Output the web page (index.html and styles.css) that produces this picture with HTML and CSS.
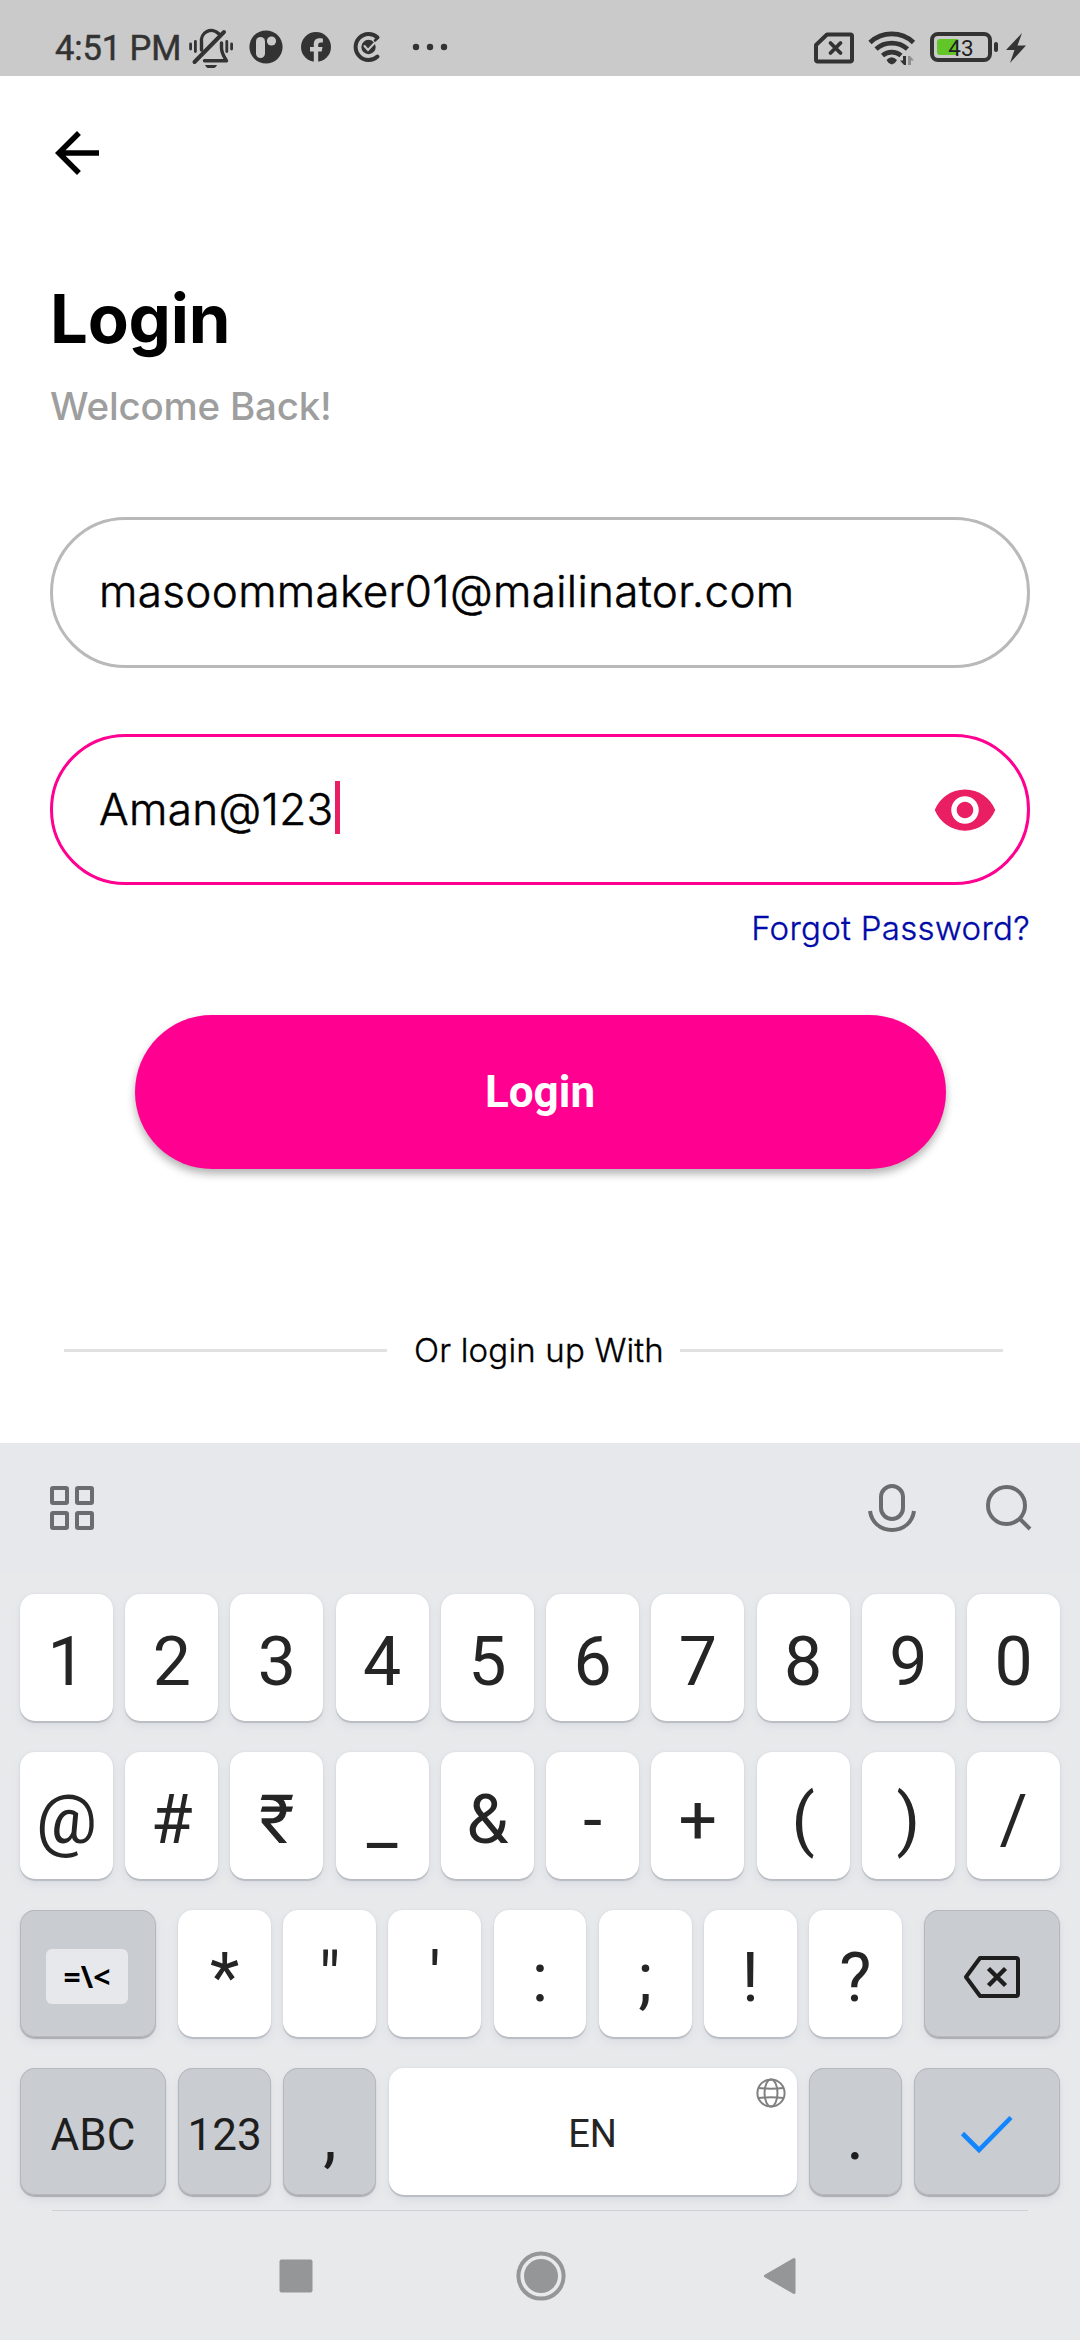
FILE: index.html
```html
<!DOCTYPE html>
<html lang="en">
<head>
<meta charset="utf-8">
<title>Login</title>
<link rel="stylesheet" href="styles.css">
</head>
<body>
<div class="phone">
  <header class="status">
    <span class="time">4:51 PM</span>
    <div class="notices">
      <svg class="bell" width="46" height="40" viewBox="188 28 46 40" fill="none" stroke="#333" stroke-width="3.4" stroke-linecap="round" stroke-linejoin="round">
        <path d="M190.600 44v5M195.400 41.500v10M226.800 41.500v10M231.600 44v5" stroke-width="2.800"/>
        <path d="M224 32l-29.500 30" stroke-width="4"/>
        <path d="M201.500 50v-8a10 10 0 0 1 17-8.500M221.500 43v5c0 5 2 8 5 12.800h-22"/>
        <path d="M205 65h12c-2 5-10 5-12 0z" fill="#333" stroke="none"/>
      </svg>
      <svg class="disc" width="34" height="34" viewBox="0 0 34 34"><circle cx="17" cy="17" r="16.600" fill="#333"/><rect x="7" y="7" width="9" height="21" rx="4.500" fill="#cacaca"/><circle cx="22.500" cy="11" r="4.600" fill="#cacaca"/></svg>
      <svg class="fb" width="30" height="30" viewBox="0 0 30 30"><circle cx="15" cy="15" r="15" fill="#333"/><path d="M12.800 30.200V19.600H9V15h3.800v-2.800c0-4 2.300-6 5.800-6 1.300 0 2.600.2 3.300.3v3.900h-2.200c-1.800 0-2.500 1-2.500 2.300V15h4.300l-.8 4.600h-3.500v10.600z" fill="#cacaca"/></svg>
      <svg class="cee" width="28" height="32" viewBox="0 0 28 32" fill="none" stroke="#333" stroke-linecap="round"><path d="M24.500 6.500a13 13 0 1 0 0 19" stroke-width="4"/><circle cx="15.500" cy="16" r="7.200" fill="#333" stroke="none"/><path d="M11.500 15l3.500 4 6.500-7" stroke="#cacaca" stroke-width="2"/><path d="M22 9.500l2-2" stroke-width="2.500"/></svg>
      <svg class="dots" width="36" height="8" viewBox="0 0 36 8" fill="#333"><circle cx="4" cy="4" r="3.200"/><circle cx="18" cy="4" r="3.200"/><circle cx="32" cy="4" r="3.200"/></svg>
    </div>
    <div class="system">
      <svg class="sim" width="40" height="32" viewBox="0 0 40 32" fill="none" stroke="#333" stroke-width="4" stroke-linejoin="round" stroke-linecap="round"><path d="M13 2.500H36.500a1.500 1.500 0 0 1 1.500 1.500V28a1.500 1.500 0 0 1-1.500 1.500H3.500A1.500 1.500 0 0 1 2 28V13z"/><path d="M16.500 11l10 10M26.500 11l-10 10" stroke-width="3.800"/></svg>
      <svg class="wifi" width="48" height="36" viewBox="868 30 48 36" fill="none" stroke="#333" stroke-width="4.800"><path d="M870 42.500a32 32 0 0 1 43.500 0M876 49a24 24 0 0 1 31.500 0M882.500 55.500a14.500 14.500 0 0 1 18.500 0"/><path d="M886.500 60q5-5.500 10.500 0q-1.500 3.500-5.200 4.500-3.800-1-5.300-4.500z" fill="#333" stroke="none"/><path d="M906 56v9h-2l-4-4.500h3V56z" fill="#333" stroke="none"/><path d="M908 65v-9h2l4 4.500h-3V65z" fill="#8f8f8f" stroke="none"/></svg>
      <div class="battery"><span class="charge"></span><span class="level">43</span></div>
      <span class="tip"></span>
      <svg class="bolt" width="20" height="30" viewBox="0 0 20 30" fill="#333"><path d="M16 0L0 17h8.500L4 30 20 12.500h-8.500z"/></svg>
    </div>
  </header>

  <main class="page">
    <svg class="back" width="66" height="66" viewBox="0 0 24 24"><path d="M20 11H7.830l5.590-5.590L12 4l-8 8 8 8 1.410-1.410L7.830 13H20z"/></svg>
    <h1 class="title">Login</h1>
    <p class="subtitle">Welcome Back!</p>
    <div class="field"><span class="value">masoommaker01@mailinator.com</span></div>
    <div class="field active">
      <span class="value">Aman@123</span><span class="caret"></span>
      <svg class="eye" width="66" height="66" viewBox="0 0 24 24" fill="#e91e63"><path d="M12 4.500C7 4.500 2.730 7.610 1 12c1.730 4.390 6 7.500 11 7.500s9.270-3.110 11-7.500c-1.730-4.390-6-7.500-11-7.500zM12 17c-2.760 0-5-2.240-5-5s2.240-5 5-5 5 2.240 5 5-2.240 5-5 5zm0-8c-1.660 0-3 1.340-3 3s1.340 3 3 3 3-1.340 3-3-1.340-3-3-3z"/></svg>
    </div>
    <a class="forgot">Forgot Password?</a>
    <button class="submit">Login</button>
    <div class="or"><span class="rule"></span><span class="or-text">Or login up With</span><span class="rule"></span></div>
  </main>

  <section class="keyboard">
    <div class="tools">
      <svg width="44" height="44" viewBox="0 0 44 44" fill="none" stroke="#6b6c6e" stroke-width="4"><rect x="2" y="2" width="15" height="15" rx="1"/><rect x="27" y="2" width="15" height="15" rx="1"/><rect x="2" y="27" width="15" height="15" rx="1"/><rect x="27" y="27" width="15" height="15" rx="1"/></svg>
      <svg class="mic" width="48" height="48" viewBox="0 0 48 48" fill="none" stroke="#6b6c6e" stroke-width="4"><rect x="13" y="2" width="22" height="33" rx="11"/><path d="M2 27c1.500 11 10 19 22 19s20.500-8 22-19"/></svg>
      <svg width="46" height="46" viewBox="0 0 46 46" fill="none" stroke="#6b6c6e" stroke-width="4"><circle cx="20.500" cy="20.500" r="18.500"/><path d="M33.500 33.500L44 44"/></svg>
    </div>
    <div class="keys">
      <div class="row"><span class="key">1</span><span class="key">2</span><span class="key">3</span><span class="key">4</span><span class="key">5</span><span class="key">6</span><span class="key">7</span><span class="key">8</span><span class="key">9</span><span class="key">0</span></div>
      <div class="row"><span class="key">@</span><span class="key">#</span><span class="key">₹</span><span class="key">_</span><span class="key">&amp;</span><span class="key">-</span><span class="key">+</span><span class="key">(</span><span class="key">)</span><span class="key">/</span></div>
      <div class="row">
        <span class="key dark shift"><span class="chip">=\&lt;</span></span>
        <span class="key">*</span><span class="key">"</span><span class="key">'</span><span class="key">:</span><span class="key">;</span><span class="key">!</span><span class="key">?</span>
        <span class="key dark erase"><svg width="58" height="44" viewBox="0 0 58 44" fill="none" stroke="#1e1e1e" stroke-width="4" stroke-linejoin="round"><path d="M17 3H53a2 2 0 0 1 2 2V39a2 2 0 0 1-2 2H17L3 22z"/><path d="M25.500 13.500l17 17M42.500 13.500l-17 17" stroke-width="4.500"/></svg></span>
      </div>
      <div class="row">
        <span class="key dark wide label">ABC</span><span class="key dark unit label">123</span><span class="key dark unit">,</span>
        <span class="key space">EN<svg class="globe" width="30" height="30" viewBox="0 0 30 30" fill="none" stroke="#808080" stroke-width="2"><circle cx="15" cy="15" r="13.600"/><ellipse cx="15" cy="15" rx="6.500" ry="13.600"/><path d="M2.500 10q12.500 1.500 25 0M2.500 20q12.500-1.500 25 0"/></svg></span>
        <span class="key dark unit">.</span>
        <span class="key dark wide check"><svg width="56" height="40" viewBox="0 0 56 40" fill="none" stroke="#1285ff" stroke-width="4.600"><path d="M3.500 19.500L20 36 52 3.500"/></svg></span>
      </div>
    </div>
    <div class="nav">
      <svg width="34" height="34" viewBox="0 0 34 34"><rect x=".5" y=".5" width="33" height="33" rx="2" fill="#959698"/></svg>
      <svg class="home" width="50" height="50" viewBox="0 0 50 50"><circle cx="25" cy="25" r="22.600" fill="none" stroke="#959698" stroke-width="4"/><circle cx="25" cy="25" r="17" fill="#959698"/></svg>
      <svg width="34" height="38" viewBox="0 0 34 38"><path d="M31 2.500v33L2.500 19z" fill="#959698" stroke="#959698" stroke-width="3" stroke-linejoin="round"/></svg>
    </div>
  </section>
</div>
</body>
</html>
```
FILE: styles.css
```css
* { box-sizing: border-box; }
body { margin: 0; background: #fff; font-family: Inter, sans-serif; }
svg { display: block; flex: none; }
.phone { width: 1080px; height: 2340px; display: flex; flex-direction: column; overflow: hidden; }

.status { height: 76px; background: #cacaca; display: flex; font-family: Roboto, sans-serif; color: #333; }
.time { width: 133px; padding-top: 28px; margin-left: 55px; font-size: 34.500px; line-height: 40px; white-space: nowrap; font-weight: 400; letter-spacing: -.1px; -webkit-text-stroke: .5px #333; }
.notices, .system { display: flex; align-items: flex-start; }
.bell { margin-top: 28px; }
.disc { margin: 30px 0 0 15px; }
.fb { margin: 32px 0 0 18px; }
.cee { margin: 31px 0 0 22px; }
.dots { margin: 43px 0 0 31px; }
.system { margin-left: auto; padding-right: 54px; }
.sim { margin-top: 32px; }
.wifi { margin: 30px 0 0 14px; }
.battery { position: relative; width: 62px; height: 30px; margin: 32px 0 0 14px; border: 4px solid #333; border-radius: 8px; text-align: center; }
.charge { position: absolute; left: 3px; top: 3px; width: 21px; height: 16px; border-radius: 3px 0 0 3px; background: #62c628; }
.level { position: relative; display: block; font-size: 22.500px; line-height: 25px; color: #222; }
.tip { width: 4px; height: 10px; margin: 42px 0 0 2px; border-radius: 2px; background: #333; }
.bolt { margin: 33px 0 0 8px; }

.page { height: 1367px; padding: 44px 50px 0; display: flex; flex-direction: column; }
.back { margin-left: -6px; }
.title { margin: 93px 0 0; font-size: 67px; line-height: 80px; font-weight: 700; letter-spacing: -.2px; }
.subtitle { margin: 24px 0 0; font-size: 38.500px; line-height: 46px; font-weight: 500; color: #9e9e9e; letter-spacing: -.2px; }
.field { height: 151px; margin-top: 88px; border: 3px solid #b9b9b9; border-radius: 76px; padding: 0 29px 3px 46px; display: flex; align-items: center; color: #000; font-size: 44px; font-weight: 300; letter-spacing: .34px; -webkit-text-stroke: .5px #000; }
.field.active { margin-top: 66px; border-color: #ff0090; padding-bottom: 2px; }
.caret { width: 5.500px; height: 53px; margin: -2px 0 0 1px; background: #e91e63; }
.eye { margin: 2px 0 0 auto; }
.forgot { align-self: flex-end; margin-top: 23px; font-size: 33px; line-height: 40px; color: #000aa8; font-weight: 300; letter-spacing: .3px; -webkit-text-stroke: .35px #000aa8; }
.submit { align-self: center; width: 811px; height: 154px; margin-top: 67px; padding: 0; border: 0; border-radius: 77px; background: #ff0090; box-shadow: 0 5px 8px rgba(0,0,0,.3); color: #fff; font: 700 44px/154px Roboto, sans-serif; }
.or { margin: 161px 27px 0 14px; display: flex; align-items: center; justify-content: space-between; }
.rule { width: 323px; height: 3px; background: #e1e1e1; }
.or-text { margin-left: 11px; font-size: 33px; line-height: 40px; font-weight: 300; letter-spacing: .17px; -webkit-text-stroke: .35px #000; }

.keyboard { height: 897px; background: #e7e9eb; font-family: Roboto, sans-serif; color: #252525; }
.tools { height: 129px; padding: 0 48px 0 50px; display: flex; align-items: center; background: #e7e8eb; }
.mic { margin-left: auto; margin-right: 70px; }
.keys { padding: 22px 20px 0; display: flex; flex-direction: column; gap: 31px; }
.row { display: flex; gap: 12.200px; height: 127px; }
.key { flex: 1 1 0; min-width: 0; display: flex; align-items: center; justify-content: center; font-size: 68px; line-height: 80px; padding-top: 8px; background: #fff; border-radius: 15px; box-shadow: 0 2px 1px #b9bcc1, 0 0 2px #d3d5d9, 0 5px 8px #d9dce3; }
.dark { background: #c9ccd1; color: #1e1e1e; box-shadow: inset 0 0 0 1px #b5b8bc, 0 2px 1px #abadb1, 0 5px 8px #d9dce3; }
.shift { flex: none; width: 136px; margin-right: 10px; padding: 6px 2px 0 0; }
.erase { flex: none; width: 136px; margin-left: 10px; padding: 6px 0 0; }
.chip { width: 82px; height: 55px; border-radius: 6px; background: #e7e8ec; color: #000; text-align: center; font: 700 30px/56px "Noto Sans", sans-serif; }
.wide { flex: none; width: 146px; }
.unit { flex: none; width: 93px; }
.label { font-size: 44px; padding-top: 6px; }
.space { position: relative; font-size: 38px; padding-top: 4px; }
.globe { position: absolute; top: 10px; right: 11px; }
.check { padding: 5px 0 0 0; }
.nav { margin: 15px 52px 0; border-top: 1px solid #cfd1d4; height: 130px; padding: 0 231px 0 227px; display: flex; align-items: center; justify-content: space-between; }
.home { margin-left: 5px; }
```
